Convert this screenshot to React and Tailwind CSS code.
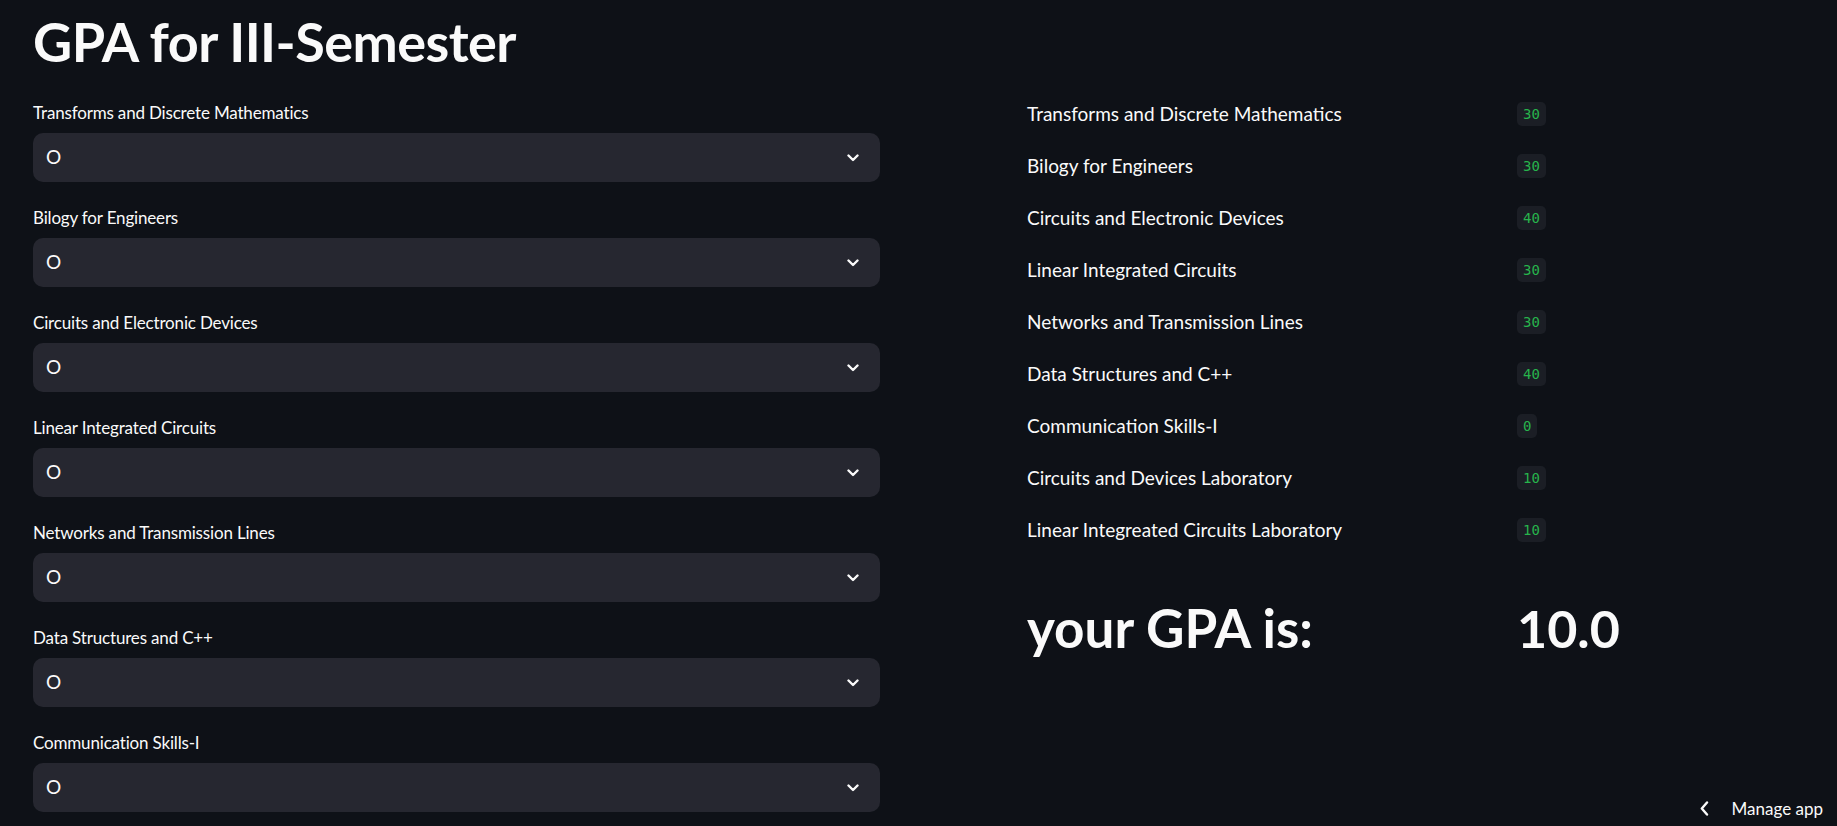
const subjects = [
  { name: "Transforms and Discrete Mathematics", points: 30 },
  { name: "Bilogy for Engineers", points: 30 },
  { name: "Circuits and Electronic Devices", points: 40 },
  { name: "Linear Integrated Circuits", points: 30 },
  { name: "Networks and Transmission Lines", points: 30 },
  { name: "Data Structures and C++", points: 40 },
  { name: "Communication Skills-I", points: 0 },
  { name: "Circuits and Devices Laboratory", points: 10 },
  { name: "Linear Integreated Circuits Laboratory", points: 10 },
];

function ChevronDown() {
  return (
    <svg width="12" height="8" viewBox="0 0 12 8" fill="none">
      <path d="M1.5 1.5 L6 6 L10.5 1.5" stroke="#fafafa" strokeWidth="2.4" strokeLinecap="round" strokeLinejoin="round" />
    </svg>
  );
}

function GradeSelect({ label }) {
  return (
    <div className="mb-[25px]">
      <div className="h-[21px] leading-[21px] text-[17px] text-[#fafafa] mb-[10px] tracking-[-0.01em]">{label}</div>
      <div className="h-[49px] rounded-[10px] bg-[#262730] flex items-center justify-between pl-[13px] pr-[21px]">
        <span className="text-[19px] text-[#fafafa]">O</span>
        <ChevronDown />
      </div>
    </div>
  );
}

export default function App() {
  // only the first seven selects fit in the viewport
  const visible = subjects.slice(0, 7);

  return (
    <div
      className="relative h-screen w-full overflow-hidden bg-[#0e1117] text-[#fafafa]"
      style={{ fontFamily: "Lato, 'Noto Sans', sans-serif" }}
    >
      <div className="pl-[33px] pt-[11px]">
        {/* TITLE */}
        <h1 className="text-[54px] leading-[62px] font-bold tracking-[-0.01em] mb-[29px]">GPA for III-Semester</h1>

        <div className="flex gap-[147px]">
          {/* SELECTS */}
          <div className="w-[847px] shrink-0">
            {visible.map(s => (
              <GradeSelect key={s.name} label={s.name} />
            ))}
          </div>

          {/* RESULTS */}
          <div className="flex-1 -mt-[14px]">
            {subjects.map(s => (
              <div key={s.name} className="h-[52px] flex items-center">
                <div className="w-[490px] text-[19px]">{s.name}</div>
                <span className="h-[24px] px-[6px] rounded-[5px] bg-[#1b1e25] text-[#27b44c] text-[14px] leading-[24px]" style={{ fontFamily: "'DejaVu Sans Mono', monospace" }}>
                  {s.points}
                </span>
              </div>
            ))}
            <div className="flex items-center h-[64px] mt-[40px]">
              <div className="w-[490px] text-[53px] font-bold">your GPA is:</div>
              <div className="text-[52px] font-bold">10.0</div>
            </div>
          </div>
        </div>
      </div>

      {/* MANAGE APP */}
      <div className="absolute right-[14px] bottom-[5px] flex items-center gap-[23px] text-[17px]">
        <svg width="9" height="15" viewBox="0 0 9 15" fill="none">
          <path d="M7 1.5 L1.8 7.5 L7 13.5" stroke="#fafafa" strokeWidth="2.4" strokeLinecap="round" strokeLinejoin="round" />
        </svg>
        <span>Manage app</span>
      </div>
    </div>
  );
}
